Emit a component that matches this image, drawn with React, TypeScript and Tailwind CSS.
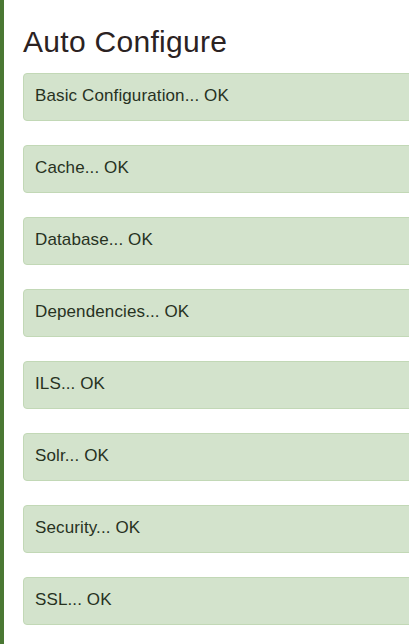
const steps = [
  'Basic Configuration',
  'Cache',
  'Database',
  'Dependencies',
  'ILS',
  'Solr',
  'Security',
  'SSL',
]

function StatusAlert({ label }: { label: string }) {
  return (
    <div className="h-[48px] w-[420px] shrink-0 rounded-[4px] border border-[#c2d8b6] bg-[#d3e3cc] pl-[11px] pb-[2px] flex items-center text-[17px] tracking-[0.12px] text-[#27321f]">
      {label}... OK
    </div>
  )
}

export default function App() {
  return (
    <div
      className="flex h-[644px] w-[409px] overflow-hidden bg-white"
      style={{ fontFamily: '"Liberation Sans", Arial, sans-serif' }}
    >
      <div className="w-[4px] shrink-0 bg-[#4a7833]" />
      <div className="flex-1 pl-[19px] pt-[25px]">
        <h1 className="text-[30px] leading-[33px] tracking-[0.3px] text-[#2b2222] mb-[15px]">Auto Configure</h1>
        <div className="flex flex-col gap-[24px]">
          {steps.map((s) => (
            <StatusAlert key={s} label={s} />
          ))}
        </div>
      </div>
    </div>
  )
}
